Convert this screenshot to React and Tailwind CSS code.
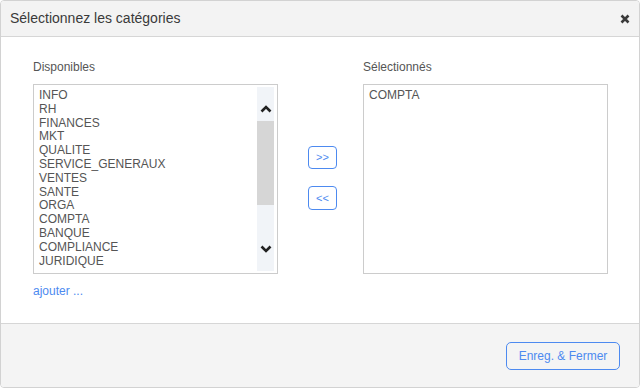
import React from "react";

const available = [
  "INFO",
  "RH",
  "FINANCES",
  "MKT",
  "QUALITE",
  "SERVICE_GENERAUX",
  "VENTES",
  "SANTE",
  "ORGA",
  "COMPTA",
  "BANQUE",
  "COMPLIANCE",
  "JURIDIQUE",
];

const selected = ["COMPTA"];

function Chevron({ up }) {
  return (
    <svg width="12" height="8" viewBox="0 0 12 8">
      <path
        d={up ? "M1.5 6.5 L6 2 L10.5 6.5" : "M1.5 1.5 L6 6 L10.5 1.5"}
        fill="none"
        stroke="#222"
        strokeWidth="2.6"
      />
    </svg>
  );
}

function ListBox({ items, scrollbar }) {
  return (
    <div className="flex h-[190px] border border-[#cccccc] bg-white">
      <ul className="flex-1 pl-[5px] pt-[4px] text-[12px] leading-[13.8px] text-[#555]">
        {items.map((item) => (
          <li key={item}>{item}</li>
        ))}
      </ul>
      {scrollbar && (
        <div className="my-[2px] mr-[3px] flex w-[17px] flex-col bg-[#f1f4f8]">
          <div className="flex h-[34px] items-end justify-center pb-[8px]">
            <Chevron up />
          </div>
          <div className="h-[84px] bg-[#d6d6d6]" />
          <div className="flex flex-1 items-end justify-center pb-[18px]">
            <Chevron />
          </div>
        </div>
      )}
    </div>
  );
}

export default function App() {
  return (
    <div
      className="flex h-[388px] w-[640px] flex-col overflow-hidden rounded-[4px] border border-[#d2d2d2] bg-white text-[#333]"
      style={{ fontFamily: '"Liberation Sans", Arial, sans-serif' }}
    >
      <div className="flex h-[36px] items-center justify-between border-b border-[#d6d6d6] bg-[#f3f3f3] pl-[9px] pr-[9px]">
        <span className="text-[14px] text-[#3a3a3a]">Sélectionnez les catégories</span>
        <svg width="10" height="10" viewBox="0 0 10 10">
          <path d="M1.5 1.5 L8.5 8.5 M8.5 1.5 L1.5 8.5" stroke="#3a3a3a" strokeWidth="2.6" />
        </svg>
      </div>

      <div className="flex h-[286px] pl-[32px] pr-[31px] pt-[23px]">
        <div className="w-[245px]">
          <div className="mb-[10px] text-[12px] leading-[14px] text-[#555]">Disponibles</div>
          <ListBox items={available} scrollbar />
          <a href="#" className="mt-[10px] block text-[12px] leading-[14px] text-[#4d8af0]">
            ajouter ...
          </a>
        </div>

        <div className="flex w-[85px] flex-col pl-[30px] pt-[86px]">
          <button className="flex h-[23px] w-[29px] items-center justify-center rounded-[4px] border border-[#4d8af0] text-[11px] text-[#4d8af0]">
            &gt;&gt;
          </button>
          <button className="mt-[17px] flex h-[24px] w-[29px] items-center justify-center rounded-[4px] border border-[#4d8af0] text-[11px] text-[#4d8af0]">
            &lt;&lt;
          </button>
        </div>

        <div className="w-[245px]">
          <div className="mb-[10px] text-[12px] leading-[14px] text-[#555]">Sélectionnés</div>
          <ListBox items={selected} />
        </div>
      </div>

      <div className="flex flex-1 items-center justify-end border-t border-[#d6d6d6] bg-[#f4f4f4] pr-[19px]">
        <button className="h-[28px] w-[114px] rounded-[5px] border border-[#4d8af0] text-[12px] text-[#4d8af0]">
          Enreg. &amp; Fermer
        </button>
      </div>
    </div>
  );
}
